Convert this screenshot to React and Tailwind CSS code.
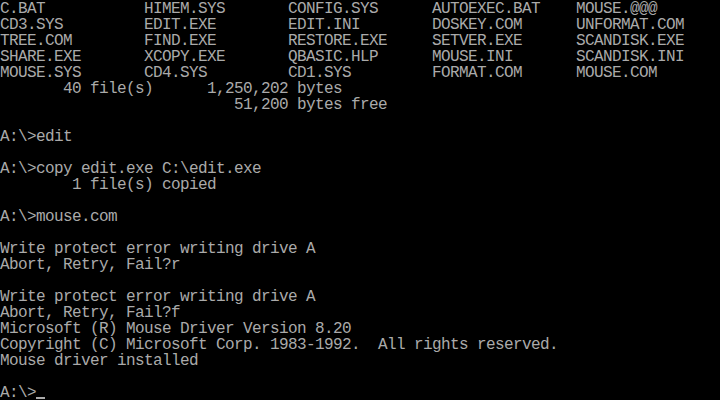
import React from "react";

const lines = [
  "C.BAT           HIMEM.SYS       CONFIG.SYS      AUTOEXEC.BAT    MOUSE.@@@",
  "CD3.SYS         EDIT.EXE        EDIT.INI        DOSKEY.COM      UNFORMAT.COM",
  "TREE.COM        FIND.EXE        RESTORE.EXE     SETVER.EXE      SCANDISK.EXE",
  "SHARE.EXE       XCOPY.EXE       QBASIC.HLP      MOUSE.INI       SCANDISK.INI",
  "MOUSE.SYS       CD4.SYS         CD1.SYS         FORMAT.COM      MOUSE.COM",
  "       40 file(s)      1,250,202 bytes",
  "                          51,200 bytes free",
  "",
  "A:\\>edit",
  "",
  "A:\\>copy edit.exe C:\\edit.exe",
  "        1 file(s) copied",
  "",
  "A:\\>mouse.com",
  "",
  "Write protect error writing drive A",
  "Abort, Retry, Fail?r",
  "",
  "Write protect error writing drive A",
  "Abort, Retry, Fail?f",
  "Microsoft (R) Mouse Driver Version 8.20",
  "Copyright (C) Microsoft Corp. 1983-1992.  All rights reserved.",
  "Mouse driver installed",
  "",
];

export default function App() {
  return (
    <div className="w-[720px] h-[400px] pt-[1px] bg-black overflow-hidden text-[#aaaaaa] font-['Liberation_Mono',monospace] text-[16px] tracking-[-0.6px]">
      {lines.map((l, i) => (
        <div key={i} className="h-[16px] leading-[16px] whitespace-pre">
          {l}
        </div>
      ))}
      <div className="h-[16px] leading-[16px] whitespace-pre flex">
        <span>A:\&gt;</span>
        <span className="inline-flex flex-col justify-end w-[9px] h-[16px] pb-[2px]">
          <span className="block w-[9px] h-[2px] bg-[#aaaaaa]"></span>
        </span>
      </div>
    </div>
  );
}
